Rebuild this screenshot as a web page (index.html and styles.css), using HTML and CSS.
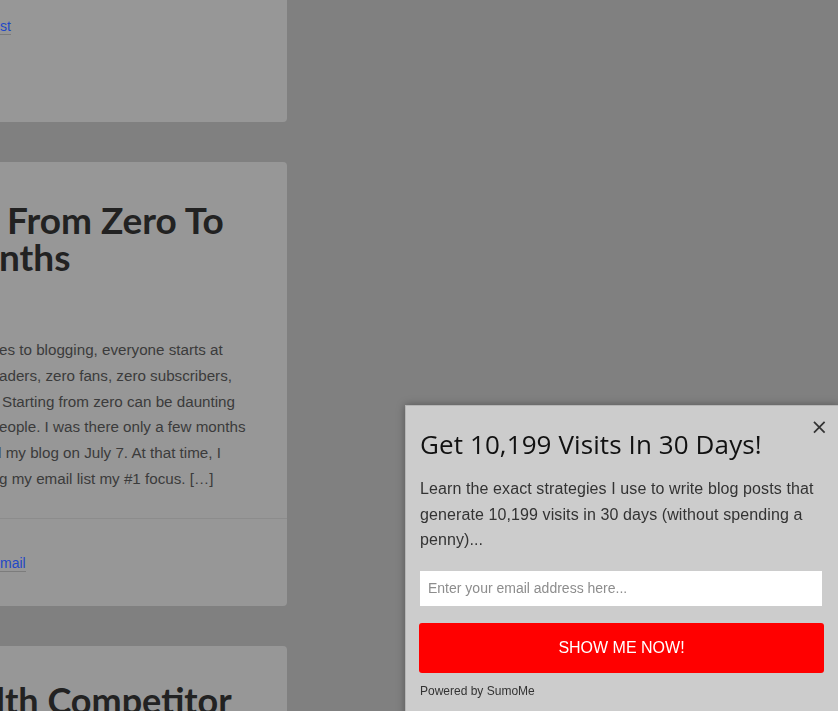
FILE: index.html
```html
<!DOCTYPE html>
<html lang="en">
<head>
  <meta charset="UTF-8" />
  <meta name="viewport" content="width=device-width, initial-scale=1" />
  <title>Blog - Get 10,199 Visits</title>
  <link rel="stylesheet" href="styles.css">
</head>
<body>
  <main class="posts">
    <article class="post post-first">
      <div class="post-foot">
        <a href="#" class="more">st</a>
      </div>
    </article>

    <article class="post">
      <h2 class="post-title">
        <span class="line line-from">From Zero To</span>
        <span class="line line-nths">nths</span>
      </h2>
      <p class="excerpt">
        <span class="line">es to blogging, everyone starts at</span>
        <span class="line">aders, zero fans, zero subscribers,</span>
        <span class="line line-start">Starting from zero can be daunting</span>
        <span class="line">eople. I was there only a few months</span>
        <span class="line line-cut">d my blog on July 7. At that time, I</span>
        <span class="line">g my email list my #1 focus. […]</span>
      </p>
      <div class="post-foot">
        <a href="#" class="more">mail</a>
      </div>
    </article>

    <article class="post post-last">
      <h2 class="post-title">
        <span class="line">lth Competitor</span>
      </h2>
    </article>
  </main>

  <aside class="optin" aria-label="Newsletter signup">
    <button class="optin-close" aria-label="Close">&times;</button>
    <h3 class="optin-title">Get 10,199 Visits In 30 Days!</h3>
    <p class="optin-text">Learn the exact strategies I use to write blog posts that generate 10,199 visits in 30 days (without spending a penny)...</p>
    <form class="optin-form" onsubmit="return false">
      <input type="email" placeholder="Enter your email address here..." />
      <button type="submit">SHOW ME NOW!</button>
    </form>
    <div class="optin-powered">Powered by SumoMe</div>
  </aside>
</body>
</html>
```

FILE: styles.css
```css
html, body {
  height: 100%;
}
body {
  margin: 0;
  background: #808080;
  font-family: 'Liberation Sans', Arial, sans-serif;
  color: #3a3a3a;
  overflow: hidden;
}
.posts {
  width: 287px;
  display: flex;
  flex-direction: column;
  gap: 40px;
}
.post {
  background: #979797;
  border-radius: 0 4px 4px 0;
}
.post-first {
  height: 122px;
  border-radius: 0 0 4px 0;
}
.post-first .post-foot {
  padding-top: 17px;
}
.post-title {
  margin: 0;
  padding: 39px 0 0 0;
  font-family: Lato, 'Open Sans', sans-serif;
  font-weight: 700;
  font-size: 37px;
  line-height: 37px;
  color: #222;
}
.line {
  display: block;
  white-space: nowrap;
}
.line-from {
  padding-left: 7px;
}
.line-nths {
  margin-left: -1px;
}
.excerpt {
  margin: 0;
  padding: 62px 0 26px 0;
  font-size: 15.2px;
  line-height: 25.8px;
  color: #3b3b3b;
  border-bottom: 1px solid #8c8c8c;
}
.excerpt .line {
  margin-left: -1px;
}
.excerpt .line-start {
  margin-left: 2px;
}
.excerpt .line-cut {
  margin-left: -7px;
}
.post-foot {
  padding: 35px 0 34px 0;
  font-size: 14px;
  line-height: 18px;
}
.more {
  color: #1f49c6;
  text-decoration: none;
  border-bottom: 1px solid #7c7c7c;
}
.post-last {
  height: 120px;
}
.post-last .post-title {
  padding-top: 36px;
  margin-left: -4px;
  font-size: 36px;
}

/* popup */
.optin {
  position: fixed;
  left: 405px;
  top: 405px;
  width: 418px;
  height: 320px;
  padding: 0 0 0 14px;
  background: #cccccc;
  border: 1px solid #b5b5b5;
  box-shadow: 0 0 8px rgba(0,0,0,0.35);
  color: #333;
}
.optin-close {
  position: absolute;
  top: 11px;
  right: 10px;
  background: none;
  border: none;
  padding: 0;
  font-family: 'DejaVu Sans', sans-serif;
  font-size: 21px;
  line-height: 20px;
  color: #333;
  cursor: pointer;
}
.optin-title {
  margin: 21px 0 0 0;
  font-family: 'Open Sans', sans-serif;
  font-weight: 400;
  font-size: 26px;
  line-height: 34px;
  color: #111;
  letter-spacing: 0.1px;
}
.optin-text {
  margin: 15px 0 0 0;
  font-size: 16px;
  line-height: 25.6px;
  color: #333;
  width: 410px;
  letter-spacing: 0.1px;
}
.optin-form {
  margin-top: 18px;
  display: flex;
  flex-direction: column;
  gap: 17px;
  width: 404px;
}
.optin-form input {
  height: 35px;
  width: 402px;
  box-sizing: border-box;
  border: none;
  padding: 0 8px;
  background: #fff;
  font-family: inherit;
  font-size: 14px;
  color: #333;
}
.optin-form input::placeholder {
  color: #8d8d8d;
}
.optin-form button {
  height: 50px;
  margin-left: -1px;
  border: none;
  border-radius: 3px;
  background: #ff0000;
  color: #fff;
  font-family: inherit;
  font-size: 16px;
  cursor: pointer;
}
.optin-powered {
  margin-top: 11px;
  font-size: 12px;
  color: #333;
}
```
